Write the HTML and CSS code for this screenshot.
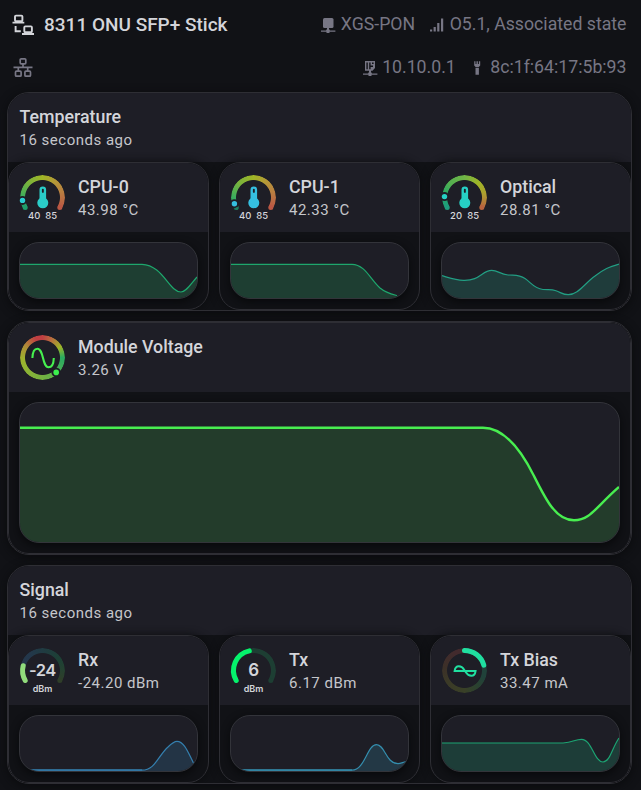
FILE: index.html
```html
<!DOCTYPE html>
<html lang="en">
<head>
<meta charset="utf-8">
<title>8311 ONU SFP+ Stick</title>
<link rel="stylesheet" href="styles.css">
</head>
<body>
<header class="top">
  <div class="row">
    <svg class="dev" viewBox="0 0 22 22"><g fill="none" stroke="#d4d5da" stroke-width="1.9"><rect x="3" y="1.6" width="7.4" height="5.6" rx="1"/><rect x="12.3" y="12.4" width="7.6" height="5.8" rx="1"/><path d="M.5 8.6H12.3M10 20H22M3.6 12V17.3H8.8"/></g></svg>
    <h1>8311 ONU SFP+ Stick</h1>
    <span class="chip push"><svg class="i16" viewBox="0 0 16 16"><rect x="3" y="1" width="10.5" height="10" rx="1.5"/><path d="M1 13.5H6L7 12V10H9V12L10 13.5H15.4V14.8H9.5V15.9H6.5V14.8H1Z"/></svg><b>XGS-PON</b></span>
    <span class="chip state"><svg class="i16" viewBox="0 0 16 16"><path d="M1 12.4H3.2V14.6H1ZM4.6 10H6.8V14.6H4.6ZM8.2 6H10.4V14.6H8.2ZM12 1.4H14.2V14.6H12Z"/></svg><b>O5.1, Associated state</b></span>
  </div>
  <div class="row">
    <svg class="dev" viewBox="0 0 22 22"><g fill="none" stroke="#777684" stroke-width="1.7"><rect x="8.2" y="1.8" width="5.6" height="5" rx="1"/><rect x="3.5" y="14.2" width="5.6" height="5" rx="1"/><rect x="12.9" y="14.2" width="5.6" height="5" rx="1"/><path d="M1.5 10.4H20.5M11 7V10M6.3 10.5V14M15.7 10.5V14"/></g></svg>
    <span class="chip push"><svg class="i16" viewBox="0 0 16 16"><path d="M3 1H13V8L10.5 10.8H3ZM4.4 2.4V9.2H5.8V2.4ZM7.2 2.4V9.2H8.6V7H11V5.6H8.6V2.4ZM10 2.4V4H11.6V2.4Z" fill-rule="evenodd"/><path d="M1 13.5H6L7 12V10H9V12L10 13.5H15.4V14.8H9.5V15.9H6.5V14.8H1Z"/></svg><b>10.10.0.1</b></span>
    <span class="chip mac"><svg class="i16" viewBox="0 0 16 16"><path d="M4.2 1.2H5.5V4H6.5V1.2H7.9V4H8.9V1.2H10.2V5.5L8.8 7H5.6L4.2 5.5ZM5.5 7.8H8.9V14.8H5.5Z"/></svg><b>8c:1f:64:17:5b:93</b></span>
  </div>
</header>
<main>
<section class="card">
  <div class="head"><h2>Temperature</h2><p>16 seconds ago</p></div>
  <div class="grid">
    <article class="tile">
      <div class="info">
        <div class="gauge"><div class="ring heat"></div>
          <svg viewBox="0 0 45 45"><circle cx="5.2" cy="32.5" r="2.5" fill="#1f9e6c"/><circle cx="39.8" cy="32.5" r="2.5" fill="#bb5744"/><circle cx="2.5" cy="25.4" r="4.5" fill="#1e1e26"/><circle cx="2.5" cy="25.4" r="2.7" fill="#2acdd0"/><g fill="#2acdc8"><circle cx="22.8" cy="27.8" r="5.5"/><path d="M19.5 25V14.7A3.3 3.3 0 0 1 26.1 14.7V25Z"/></g><rect x="21.9" y="13.8" width="1.9" height="4" rx=".9" fill="#1e1e26"/><text x="14.1" y="44.2">40</text><text x="31.2" y="44.2">85</text></svg></div>
        <div><h2>CPU-0</h2><p>43.98 °C</p></div>
      </div>
      <div class="chart"><svg class="green" viewBox="0 0 177 55"><path class="area" d="M0 21.3H122C143 22 149 49 161 49C166 49 170 42 177 34V55H0Z"/><path class="line" d="M0 21.3H122C143 22 149 49 161 49C166 49 170 42 177 34"/></svg></div>
    </article>
    <article class="tile">
      <div class="info">
        <div class="gauge"><div class="ring heat"></div>
          <svg viewBox="0 0 45 45"><circle cx="5.2" cy="32.5" r="2.5" fill="#1d8062"/><circle cx="39.8" cy="32.5" r="2.5" fill="#bb5744"/><circle cx="3.4" cy="28.7" r="4.5" fill="#1e1e26"/><circle cx="3.4" cy="28.7" r="2.7" fill="#35bfe0"/><circle cx="5.8" cy="33.6" r="1.4" fill="#1d8062"/><g fill="#35bfe0"><circle cx="22.8" cy="27.8" r="5.5"/><path d="M19.5 25V14.7A3.3 3.3 0 0 1 26.1 14.7V25Z"/></g><rect x="21.9" y="13.8" width="1.9" height="4" rx=".9" fill="#1e1e26"/><text x="14.1" y="44.2">40</text><text x="31.2" y="44.2">85</text></svg></div>
        <div><h2>CPU-1</h2><p>42.33 °C</p></div>
      </div>
      <div class="chart"><svg class="green" viewBox="0 0 177 55"><path class="area" d="M0 21.3H121C134 21.5 139 36 149 45C155 50 160 51 166 52.5L177 55H0Z"/><path class="line" d="M0 21.3H121C134 21.5 139 36 149 45C155 50 160 51 166 52.5"/></svg></div>
    </article>
    <article class="tile">
      <div class="info">
        <div class="gauge"><div class="ring mild"></div>
          <svg viewBox="0 0 45 45"><circle cx="5.2" cy="32.5" r="2.5" fill="#1f9c7d"/><circle cx="39.8" cy="32.5" r="2.5" fill="#b7633f"/><circle cx="2.5" cy="21.6" r="4.5" fill="#1e1e26"/><circle cx="2.5" cy="21.6" r="2.7" fill="#26d0c4"/><g fill="#26d0c4"><circle cx="22.8" cy="27.8" r="5.5"/><path d="M19.5 25V14.7A3.3 3.3 0 0 1 26.1 14.7V25Z"/></g><rect x="21.9" y="13.8" width="1.9" height="4" rx=".9" fill="#1e1e26"/><text x="14.1" y="44.2">20</text><text x="31.2" y="44.2">85</text></svg></div>
        <div><h2>Optical</h2><p>28.81 °C</p></div>
      </div>
      <div class="chart"><svg class="teal" viewBox="0 0 177 55"><path class="area" d="M0 32.7C8 35 14 37.2 21.3 37.3C38 38 40 27.3 49.7 27.3C56 27.3 58 31.3 66 32C74 32.5 77 31.5 83 35.5C89 39.5 92 45.5 101 46.5C107 47 109 46 114 47.8C119 49.5 121 51.7 126.3 51.7C136 51.7 142 41 153 33C162 26 167 24 177 21V55H0Z"/><path class="line" d="M0 32.7C8 35 14 37.2 21.3 37.3C38 38 40 27.3 49.7 27.3C56 27.3 58 31.3 66 32C74 32.5 77 31.5 83 35.5C89 39.5 92 45.5 101 46.5C107 47 109 46 114 47.8C119 49.5 121 51.7 126.3 51.7C136 51.7 142 41 153 33C162 26 167 24 177 21"/></svg></div>
    </article>
  </div>
</section>
<section class="card">
  <article class="tile">
    <div class="info">
      <div class="gauge"><div class="ring volt"></div>
        <svg viewBox="0 0 45 45"><circle cx="36.2" cy="37.4" r="4.7" fill="#1e1e26"/><circle cx="36.2" cy="37.4" r="2.8" fill="#3bf04d"/><path d="M12.4 23C12.6 17 14.5 13.7 17.4 13.7C24 13.7 22 32.3 28.6 32.3C31.8 32.3 33.6 29 33.8 23" fill="none" stroke="#46f04f" stroke-width="2.1"/></svg></div>
      <div><h2>Module Voltage</h2><p>3.26 V</p></div>
    </div>
    <div class="chart tall"><svg class="lime" viewBox="0 0 599 139"><path class="area" d="M0 24.7H463C485 24.7 502 49 514 73C526 97 536 117.3 554 117.3C570 117.3 575 105 599 84V139H0Z"/><path class="line" d="M0 24.7H463C485 24.7 502 49 514 73C526 97 536 117.3 554 117.3C570 117.3 575 105 599 84"/></svg></div>
  </article>
</section>
<section class="card">
  <div class="head"><h2>Signal</h2><p>16 seconds ago</p></div>
  <div class="grid">
    <article class="tile">
      <div class="info">
        <div class="gauge"><div class="ring rx"></div>
          <svg viewBox="0 0 45 45"><circle cx="39.8" cy="32.5" r="2.5" fill="#2f3e29"/><path class="arc" d="M5.2 32.5A20 20 0 0 1 3.2 17.7" stroke="#91dc7c"/><text class="num tight" x="22.3" y="28">-24</text><text class="unit" x="22.5" y="44.2">dBm</text></svg></div>
        <div><h2>Rx</h2><p>-24.20 dBm</p></div>
      </div>
      <div class="chart"><svg class="blue" viewBox="0 0 177 55"><path class="area" d="M0 54.2H122C135 54.2 138 40 148 31C152 27 154 25.3 157 25.3C164 25.3 168 36 173 46L177 55H0Z"/><path class="base" d="M0 54H122"/><path class="line" d="M0 54.2H122C135 54.2 138 40 148 31C152 27 154 25.3 157 25.3C164 25.3 168 36 173 46L177 55"/></svg></div>
    </article>
    <article class="tile">
      <div class="info">
        <div class="gauge"><div class="ring tx"></div>
          <svg viewBox="0 0 45 45"><circle cx="39.8" cy="32.5" r="2.5" fill="#1d3e33"/><path class="arc" d="M5.2 32.5A20 20 0 0 1 18.3 2.9" stroke="#05f26c"/><text class="num" x="22.8" y="28">6</text><text class="unit" x="22.5" y="44.2">dBm</text></svg></div>
        <div><h2>Tx</h2><p>6.17 dBm</p></div>
      </div>
      <div class="chart"><svg class="cyan" viewBox="0 0 177 55"><path class="area" d="M0 54.2H121C134 54.2 136 28.7 145.5 28.7C154 28.7 155 47.7 167 47.7C170 47.7 172 46 177 45V55H0Z"/><path class="base" d="M0 54H121"/><path class="line" d="M0 54.2H121C134 54.2 136 28.7 145.5 28.7C154 28.7 155 47.7 167 47.7C170 47.7 172 46 177 45"/></svg></div>
    </article>
    <article class="tile">
      <div class="info">
        <div class="gauge"><div class="ring bias"></div>
          <svg viewBox="0 0 45 45"><path class="arc" d="M22.5 2.5A20 20 0 0 1 41.8 17.2" stroke="#20dfa0"/><path d="M12.6 23H33.6C33.2 26 31.6 27.7 29.4 27.7C25.4 27.7 24.4 25 23 23S20.8 18.3 16.8 18.3C14.6 18.3 13 20 12.6 23Z" fill="none" stroke="#20dfa0" stroke-width="1.9"/></svg></div>
        <div><h2>Tx Bias</h2><p>33.47 mA</p></div>
      </div>
      <div class="chart"><svg class="sea" viewBox="0 0 177 55"><path class="area" d="M0 27H121C131 26.5 133 23.3 139.5 23.3C150 23.3 152 46 161 46C168 46 170 32 177 22V55H0Z"/><path class="line" d="M0 27H121C131 26.5 133 23.3 139.5 23.3C150 23.3 152 46 161 46C168 46 170 32 177 22"/></svg></div>
    </article>
  </div>
</section>
</main>
</body>
</html>
```
FILE: styles.css
```css
* { box-sizing: border-box; }
body { margin: 0; height: 790px; overflow: hidden; background: #111216; color: #d4d5da; font-family: Roboto, sans-serif; }
h1, h2, p { margin: 0; }
svg { display: block; }
.top { height: 92px; padding: 3px 14.5px 0 12px; }
.row { display: flex; align-items: center; height: 43px; }
.dev { width: 22px; height: 22px; flex: none; }
h1 { margin-left: 10px; font-size: 19px; line-height: 24px; font-weight: 500; white-space: nowrap; }
.chip { display: flex; align-items: center; color: #777684; font-size: 17.7px; line-height: 24px; white-space: nowrap; }
.chip b { font-weight: 400; margin-top: -2px; }
.push { margin-left: auto; }
.state { margin-left: 14px; }
.mac { margin-left: 14px; }
.i16 { width: 16px; height: 16px; fill: #777684; margin-right: 4.5px; flex: none; }
main { display: flex; flex-direction: column; gap: 10px; width: 625px; margin-left: 7px; }
.card { border: 1px solid #2e2e34; border-radius: 22px; overflow: hidden; box-shadow: 0 2px 10px #0a0b0d; background: #111216; }
.head { height: 69px; padding: 12px 12px 0 11.5px; background: #1e1e26; }
h2 { font-size: 17.8px; line-height: 24px; font-weight: 500; white-space: nowrap; }
p { font-size: 15px; line-height: 22px; letter-spacing: .5px; color: #c5c6cb; white-space: nowrap; }
.grid { display: grid; grid-template-columns: repeat(3, 201px); gap: 10px; background: #111216; }
.tile { border: 1px solid #2e2e34; border-radius: 21px; overflow: hidden; background: #111216; box-shadow: 0 0 8px #0b0c0e; }
.info { display: flex; height: 69px; padding: 12px 0 0 11px; gap: 13px; background: #1e1e26; }
.gauge { display: grid; width: 45px; height: 45px; flex: none; }
.gauge > * { grid-area: 1 / 1; width: 45px; height: 45px; overflow: visible; }
.gauge svg { z-index: 1; }
.ring { border-radius: 50%; -webkit-mask: radial-gradient(circle at center, transparent 17px, #000 17.9px); mask: radial-gradient(circle at center, transparent 17px, #000 17.9px); }
.heat { background: conic-gradient(#a0b526 0deg, #b39a36 35deg, #b98240 70deg, #bb5744 120deg, transparent 120deg 240deg, #1f9e6c 240deg, #40ad5b 275deg, #79b23c 315deg, #a0b526 360deg); }
.mild { background: conic-gradient(#70b446 0deg, #a0b526 45deg, #ad9f30 80deg, #b7633f 120deg, transparent 120deg 240deg, #1f9c7d 240deg, #22a866 278deg, #55b050 315deg, #70b446 360deg); }
.volt { background: conic-gradient(#c03f42 0deg, #ba6b3f 25deg, #9db429 60deg, #29aa60 90deg, #38ac5b 110deg, #65b148 155deg, #7ab23d 190deg, #9db32d 265deg, #b08b38 305deg, #c03f42 340deg, #c03f42 360deg); }
.rx { background: conic-gradient(#203b42 0deg, #1d4035 55deg, #244131 85deg, #2f3e29 120deg, transparent 120deg 240deg, #25364a 280deg, #23374b 320deg, #203b42 360deg); }
.tx { background: conic-gradient(#1d3e33 0 120deg, transparent 120deg 240deg, #1d3e33 240deg); }
.bias { background: conic-gradient(#20423a 0 110deg, #2a4130 140deg, #394027 180deg, #3b3a27 235deg, #3c3028 280deg, #422a2d 330deg, #422a2d 360deg); }
.gauge text { font: 500 9.5px Inter, sans-serif; fill: #d4d5da; text-anchor: middle; }
.gauge .num { font-size: 17px; font-weight: 600; }
.gauge .tight { font-size: 16.5px; letter-spacing: -.6px; }
.gauge .unit { font-size: 9px; font-weight: 600; }
.arc { fill: none; stroke-width: 5; stroke-linecap: round; }
.chart { height: 57px; margin: 10px; border: 1px solid #33343a; border-radius: 20px; overflow: hidden; background: #1e1e26; box-shadow: 0 3px 9px #08090b; }
.tall { height: 141px; }
.chart svg { width: 100%; height: 100%; }
.area { opacity: .23; }
.line { fill: none; stroke-width: 1.2; }
.base { fill: none; stroke-width: 2; opacity: .6; }
.green .area { fill: #1ea75c; } .green .line { stroke: #1ea76d; }
.teal .area { fill: #229e83; } .teal .line { stroke: #229e83; }
.lime .area { fill: #33a03c; } .lime .line { stroke: #48ee50; stroke-width: 2.4; }
.blue .area { fill: #347fae; } .blue .line, .blue .base { stroke: #347fae; }
.cyan .area { fill: #348eae; } .cyan .line, .cyan .base { stroke: #348eae; }
.sea .area { fill: #1ca473; } .sea .line { stroke: #1ca473; }
```
